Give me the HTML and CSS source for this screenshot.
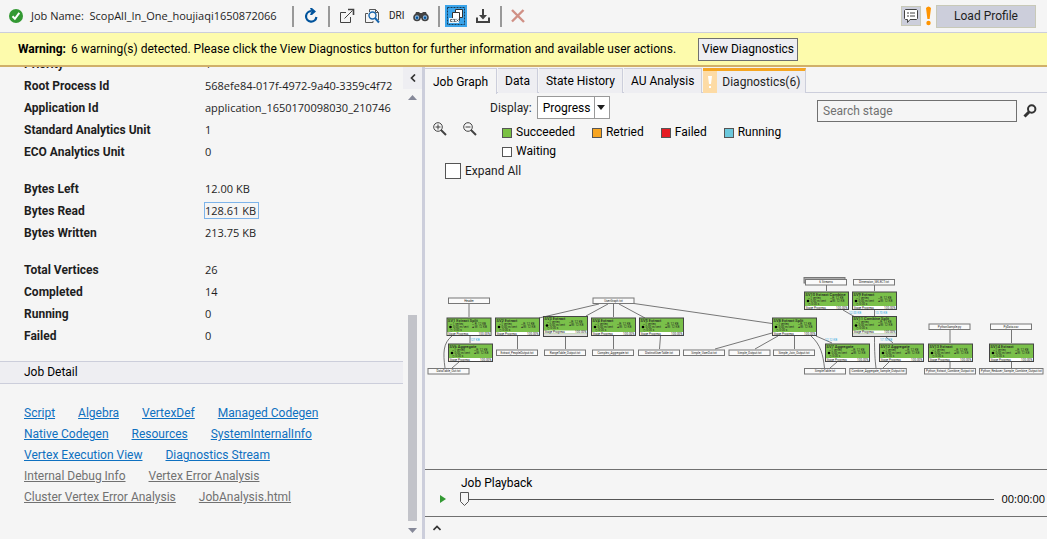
FILE: index.html
```
<!DOCTYPE html>
<html lang="en">
<head>
<meta charset="utf-8">
<title>Job View</title>
<link rel="stylesheet" href="styles.css">
</head>
<body>
<header class="toolbar">
  <svg class="status" width="14" height="14" viewBox="0 0 14 14"><circle cx="7" cy="7" r="7" fill="#339933"/><path d="M3.5 7.2l2.4 2.6 4.4-6" fill="none" stroke="#fff" stroke-width="2"/></svg>
  <span class="job-name">Job Name:&nbsp; ScopAll_In_One_houjiaqi1650872066</span>
  <span class="sep"></span>
  <button class="tool" aria-label="Refresh"><svg width="16" height="16" viewBox="0 0 16 16"><path d="M8.5 3.2A5.2 5.2 0 1 0 13.4 9" fill="none" stroke="#00539c" stroke-width="2.2"/><path d="M7 0h2l4 3.4-4 3.6H7l1.5-3.6z" fill="#00539c"/></svg></button>
  <span class="sep"></span>
  <button class="tool" aria-label="Open in new window"><svg width="16" height="16" viewBox="0 0 16 16" fill="none" stroke="#424242"><path d="M7 4.500H1.500v10h10V9M5.500 10.500L13.500 2.500"/><path d="M9 1.500h5.500V7" stroke-width="1.600"/></svg></button>
  <button class="tool" aria-label="Find in script"><svg width="16" height="16" viewBox="0 0 16 16" fill="none"><path d="M5.500 4V1.500h6l3 3V12M4 5.500H1.500v9H9V13M11.500 1.500v3h3" stroke="#555"/><circle cx="8.500" cy="7.500" r="3.500" fill="#f5f5f5" stroke="#1765ad" stroke-width="1.400"/><path d="M11 10l4 4.500" stroke="#1765ad" stroke-width="2"/></svg></button>
  <button class="tool dri">DRI</button>
  <button class="tool" aria-label="Find"><svg width="16" height="16" viewBox="0 0 16 16"><path d="M3 4h3l1 1h2l1-1h3l1.500 4H9.500v2h-3V8h-5z" fill="#424242"/><circle cx="4" cy="9.500" r="3" fill="#8fb8de" stroke="#424242" stroke-width="1.600"/><circle cx="12" cy="9.500" r="3" fill="#8fb8de" stroke="#424242" stroke-width="1.600"/><circle cx="4" cy="9.700" r="1.200" fill="#00539c"/><circle cx="12" cy="9.700" r="1.200" fill="#00539c"/></svg></button>
  <span class="sep"></span>
  <button class="tool active" aria-label="Show job graph" aria-pressed="true"><svg width="22" height="22" viewBox="0 0 22 22"><rect width="22" height="22" fill="#3ba4ea"/><rect x="2.500" y="2.500" width="17" height="17" fill="none" stroke="#173b56" stroke-dasharray="2 1"/><path d="M10.500 4.500h7v8h-7z" fill="#fff" stroke="#333"/><path d="M7.500 7.500h7v8h-7z" fill="#fff" stroke="#333"/><path d="M4 13h10v5H4z" fill="#e9f3fa"/><path d="M7.500 14.500h-2v2h2m3-2h-2l2 2h-2m3-2l2 2m0-2l-2 2" fill="none" stroke="#444" stroke-width=".8"/></svg></button>
  <button class="tool" aria-label="Download"><svg width="16" height="16" viewBox="0 0 16 16"><path d="M2 9.500v4.500h12V9.500" fill="none" stroke="#424242" stroke-width="2"/><path d="M7 1h2v6h3l-4 4.500L4 7h3z" fill="#424242"/></svg></button>
  <span class="sep"></span>
  <button class="tool" aria-label="Cancel job"><svg width="14" height="16" viewBox="0 0 14 16"><path d="M1 2l12 12M12.500 2L1 13.500" stroke="#d09085" stroke-width="2.400"/></svg></button>
  <span class="spacer"></span>
  <button class="comment" aria-label="Feedback"><svg width="16" height="16" viewBox="0 0 16 16"><path d="M2.500 1.500h11l1 1v8l-1 1H7l-2.500 3v-3h-2l-1-1v-8z" fill="#fff" stroke="#424242"/><path d="M4 5h2m1 0h5M4 8h2m1 0h5" stroke="#424242"/></svg></button>
  <svg width="5" height="20" viewBox="0 0 5 20"><path d="M0 2q2.500-3 5 0L3.600 13H1.400z" fill="#ff9400"/><circle cx="2.500" cy="17" r="2.200" fill="#ff9400"/></svg>
  <button class="load">Load Profile</button>
</header>
<section class="warning">
  <p><strong>Warning:</strong> 6 warning(s) detected. Please click the View Diagnostics button for further information and available user actions.</p>
  <button class="view-diag">View Diagnostics</button>
</section>
<main class="workspace">
  <aside class="side">
    <div class="summary">
      <dl class="props">
        <div><dt>Priority</dt><dd>1</dd></div>
        <div><dt>Root Process Id</dt><dd>568efe84-017f-4972-9a40-3359c4f72</dd></div>
        <div><dt>Application Id</dt><dd>application_1650170098030_210746</dd></div>
        <div><dt>Standard Analytics Unit</dt><dd>1</dd></div>
        <div><dt>ECO Analytics Unit</dt><dd>0</dd></div>
        <div class="group"><dt>Bytes Left</dt><dd>12.00 KB</dd></div>
        <div><dt>Bytes Read</dt><dd><span class="picked">128.61 KB</span></dd></div>
        <div><dt>Bytes Written</dt><dd>213.75 KB</dd></div>
        <div class="group"><dt>Total Vertices</dt><dd>26</dd></div>
        <div><dt>Completed</dt><dd>14</dd></div>
        <div><dt>Running</dt><dd>0</dd></div>
        <div><dt>Failed</dt><dd>0</dd></div>
      </dl>
      <h2 class="section-title">Job Detail</h2>
      <nav class="links">
        <div><a href="#">Script</a><a href="#">Algebra</a><a href="#">VertexDef</a><a href="#">Managed Codegen</a></div>
        <div><a href="#">Native Codegen</a><a href="#">Resources</a><a href="#">SystemInternalInfo</a></div>
        <div><a href="#">Vertex Execution View</a><a href="#">Diagnostics Stream</a></div>
        <div class="muted"><a href="#">Internal Debug Info</a><a href="#">Vertex Error Analysis</a></div>
        <div class="muted"><a href="#">Cluster Vertex Error Analysis</a><a href="#">JobAnalysis.html</a></div>
      </nav>
    </div>
    <div class="rail">
      <button class="collapse" aria-label="Collapse panel"><svg width="6" height="8" viewBox="0 0 6 8"><path d="M5 .5L1.500 4 5 7.500" fill="none" stroke="#333" stroke-width="1.700"/></svg></button>
      <svg class="arrow" width="9" height="5" viewBox="0 0 9 5"><path d="M0 5L4.500 0 9 5z" fill="#868999"/></svg>
      <div class="track"><div class="thumb"></div></div>
      <svg class="arrow" width="9" height="5" viewBox="0 0 9 5"><path d="M0 0L4.500 5 9 0z" fill="#868999"/></svg>
    </div>
  </aside>
  <section class="content">
    <div class="tabs" role="tablist">
      <button class="tab selected" role="tab" aria-selected="true">Job Graph</button>
      <button class="tab" role="tab">Data</button>
      <button class="tab" role="tab">State History</button>
      <button class="tab" role="tab">AU Analysis</button>
      <button class="tab alert" role="tab"><span class="mark"><svg width="4" height="12" viewBox="0 0 4 12"><path d="M0 0h4L3 8H1zM1 10h2v2H1z" fill="#fff"/></svg></span>Diagnostics(6)</button>
    </div>
    <div class="controls">
      <div class="zoom">
        <button aria-label="Zoom in"><svg width="14" height="14" viewBox="0 0 14 14" fill="none" stroke="#424242"><circle cx="5" cy="5" r="4.300"/><path d="M2.500 5h5M5 2.500v5"/><path d="M8 8l5 5" stroke-width="2"/></svg></button>
        <button aria-label="Zoom out"><svg width="14" height="14" viewBox="0 0 14 14" fill="none" stroke="#424242"><circle cx="5" cy="5" r="4.300"/><path d="M2.500 5h5"/><path d="M8 8l5 5" stroke-width="2"/></svg></button>
      </div>
      <div class="display">
        <div class="display-row"><label for="mode">Display:</label>
          <span class="combo"><select id="mode"><option>Progress</option></select><svg width="8" height="5" viewBox="0 0 8 5"><path d="M0 0h8L4 5z" fill="#1e1e1e"/></svg></span></div>
        <ul class="legend">
          <li><i class="sw ok"></i>Succeeded</li><li><i class="sw retry"></i>Retried</li><li><i class="sw fail"></i>Failed</li><li><i class="sw run"></i>Running</li><li><i class="sw"></i>Waiting</li>
        </ul>
      </div>
      <div class="search"><input type="text" placeholder="Search stage" aria-label="Search stage"><button aria-label="Search"><svg width="14" height="14" viewBox="0 0 14 14"><circle cx="8.700" cy="5" r="3.700" fill="none" stroke="#333" stroke-width="2"/><path d="M6 8l-4.500 4.500" stroke="#333" stroke-width="3"/></svg></button></div>
    </div>
    <label class="expand"><input type="checkbox">Expand All</label>
    <div class="canvas"><svg id="graph" viewBox="425 180 622 289" preserveAspectRatio="xMinYMin meet" role="img" aria-label="Job graph"></svg></div>
    <div class="playback">
      <label for="time">Job Playback</label>
      <div class="player">
        <button aria-label="Play"><svg width="6" height="8" viewBox="0 0 6 8"><path d="M0 0l6 4-6 4z" fill="#339933"/></svg></button>
        <input id="time" type="range" min="0" max="100" value="0">
        <output for="time">00:00:00</output>
      </div>
    </div>
    <button class="drawer" aria-label="Expand drawer"><svg width="8" height="6" viewBox="0 0 8 6"><path d="M.5 5L4 1.500 7.500 5" fill="none" stroke="#333" stroke-width="1.700"/></svg></button>
  </section>
</main>
<script src="graph.js"></script>
</body>
</html>
```
FILE: styles.css
```
* { box-sizing: border-box; }
body { margin: 0; height: 100vh; display: flex; flex-direction: column; overflow: hidden; background: #f5f5f5; color: #1e1e1e; font: 12px/16px Roboto, "Open Sans", sans-serif; }
button { font: inherit; color: inherit; border: 0; padding: 0; background: none; }
svg { display: block; flex: none; }
.toolbar { display: flex; align-items: center; height: 33px; flex: none; padding: 0 11px 0 9px; border-bottom: 1px solid #cccedb; }
.job-name, dd, output { font: 11px/16px "Open Sans", "Noto Sans", sans-serif; }
.job-name { margin-left: 8px; min-width: 252px; white-space: nowrap; }
.sep { flex: none; width: 2px; height: 21px; margin: 0 9px; background: #999; }
.tool { display: grid; place-items: center; min-width: 14px; height: 22px; }
.tool + .tool { margin-left: 9px; }
.dri { font: 10px/16px Roboto, sans-serif; }
.active { margin: 0 -4px; }
.active + .tool { margin-left: 12px; }
.spacer { flex: 1; }
.comment { width: 20px; height: 20px; display: grid; place-items: center; margin-right: 5px; background: #cccedb; border: 1px solid #c8c9b8; }
.load { width: 100px; height: 23px; margin-left: 5px; background: #cccedb; border: 1px solid #c8c9b8; }
.warning { display: flex; align-items: center; flex: none; height: 34px; padding-left: 18px; gap: 22px; background: #fdfbac; border-bottom: 2px solid #d0b069; color: #000; white-space: nowrap; }
.warning p { margin: 0; }
.warning strong { margin-right: 2px; }
.view-diag { width: 100px; height: 23px; background: #eeeef2; border: 1px solid #707070; }
.workspace { display: flex; flex: 1; min-height: 0; }
.side { display: flex; flex: 0 0 425px; min-width: 0; border-right: 3px solid #cccedb; }
.summary { flex: 1; min-width: 0; overflow: hidden; }
.props { margin: -14px 0 14px; }
.props div { display: grid; grid-template-columns: 181px 1fr; height: 22px; align-items: center; padding-left: 24px; white-space: nowrap; }
.props .group { margin-top: 15px; }
dt { font-weight: 700; }
dd { margin: 0; }
.picked { outline: 1px solid #7eb4ea; padding-right: 2px; }
.section-title { margin: 0; padding-left: 24px; font: inherit; line-height: 21px; color: #000; background: #eeeef2; border: solid #cccedb; border-width: 1px 0; }
.links { padding: 19px 24px; line-height: 21px; white-space: nowrap; }
.links div { display: flex; gap: 23px; }
.links a { color: #0e70c0; }
.links .muted a { color: #717171; }
.rail { display: flex; flex: none; flex-direction: column; align-items: center; width: 19px; padding-bottom: 6px; }
.collapse { display: grid; place-items: center; width: 19px; height: 22px; margin-bottom: 6px; background: #eeeef2; }
.track { display: flex; flex-direction: column; justify-content: flex-end; flex: 1; width: 9px; padding-bottom: 7px; }
.thumb { height: 49%; background: #c2c3c9; }
.content { display: flex; flex-direction: column; flex: 1; min-width: 0; }
.tabs { display: flex; flex: none; height: 26px; padding: 1px 0 0; border-bottom: 1px solid #cccedb; }
.tab { height: 25px; padding: 0 7px; margin-right: 1px; background: #eeeef2; border: 1px solid #cccedb; border-width: 1px 1px 0 0; color: #000; }
.selected { position: relative; height: 26px; padding: 0 8px; background: #f5f5f5; }
.alert { display: flex; align-items: center; padding: 0 5px 0 0; border-top: 3px solid #f5a623; color: #1e1e1e; }
.mark { display: grid; place-items: center; align-self: stretch; width: 14px; margin-right: 5px; background: #fddba5; }
.controls { display: flex; align-items: flex-start; flex: none; padding: 3px 10px 0 8px; }
.zoom { display: flex; gap: 16px; padding-top: 26px; }
.display { flex: 1; padding-left: 13px; }
.display-row { display: flex; align-items: center; gap: 5px; }
.combo { display: flex; align-items: center; width: 73px; height: 23px; padding-right: 4px; background: linear-gradient(90deg, transparent 56px, #999 56px 57px, transparent 57px) #fff; border: 1px solid #999; }
select { appearance: none; flex: 1; min-width: 0; padding: 0 5px; border: 0; background: none; font: inherit; color: #000; }
.legend { display: flex; flex-wrap: wrap; width: 300px; margin: 4px 0 0 12px; padding: 0; list-style: none; line-height: 19px; color: #000; column-gap: 17px; }
.legend li { display: flex; align-items: center; gap: 4px; }
.sw { width: 10px; height: 10px; background: #fff; border: 1px solid #555; }
.ok { background: #7ac143; }
.retry { background: #f7a521; }
.fail { background: #e51c23; }
.run { background: #6bc8dc; }
.search { display: flex; align-items: center; gap: 6px; padding-top: 4px; }
.search input { width: 200px; height: 22px; padding: 0 5px; font: inherit; background: #f5f5f5; border: 1px solid #707070; }
.search input::placeholder { color: #717171; }
.expand { display: flex; align-items: center; gap: 4px; flex: none; height: 19px; padding-left: 20px; }
.expand input { appearance: none; width: 16px; height: 16px; margin: 0; background: #fff; border: 1px solid #555; }
.canvas { flex: 1; min-height: 0; }
#graph { width: 100%; height: 100%; font: 3px Roboto, sans-serif; }
#graph text { fill: #222; }
.edge { fill: none; stroke: #555; stroke-width: .8; }
.data { fill: #fafafa; stroke: #777; stroke-width: 1; }
.stack { fill: #aaa; }
.card { fill: #7ac04a; stroke: #444; stroke-width: 1; }
.foot { fill: #fff; }
.wait { fill: #ddd; }
#graph .rate { fill: #2aa7e0; }
#graph .name { font-size: 4px; font-weight: 500; }
.playback { flex: none; height: 48px; padding: 5px 2px 0 15px; border: solid #707070; border-width: 1px 0; color: #000; }
.playback label { display: block; padding-left: 21px; }
.player { display: flex; align-items: center; }
.player input { appearance: none; flex: 1; min-width: 0; height: 14px; margin: 0 7px 0 14px; background: linear-gradient(#555, #555) center / 100% 1px no-repeat; }
.player input::-webkit-slider-thumb { appearance: none; width: 9px; height: 14px; background: url("data:image/svg+xml,%3Csvg xmlns='http://www.w3.org/2000/svg' width='9' height='14'%3E%3Cpath d='M.5.5h8v9l-4 4-4-4z' fill='%23f5f5f5' stroke='%23555'/%3E%3C/svg%3E"); }
.drawer { flex: none; height: 22px; padding-left: 8px; }
```
FILE: graph.js
```
const svg = document.getElementById("graph");
const NS = "http://www.w3.org/2000/svg";

function add(tag, attrs, text) {
  const el = document.createElementNS(NS, tag);
  for (const key in attrs) el.setAttribute(key, attrs[key]);
  if (text) el.textContent = text;
  svg.append(el);
}

const edges = [
  "M469 304V317", "M470 336V343", "M452 336C443 343 443 353 445 368", "M459 362L452 368",
  "M599 304L539 318", "M608 304L586 316", "M613.500 304V317", "M619 304L645 318", "M634 303.500L772 323.500",
  "M517.500 336V349", "M565.500 337V349", "M613.500 336V349", "M660.500 336L659.500 349",
  "M772 333L715 349", "M778 336L755 349", "M794.500 336V349", "M811 336C821 345 823 355 824.500 368",
  "M816 336L832 343", "M837 362L830 368", "M826.500 285V291", "M874.500 285V291", "M843 310L855 317",
  "M874.500 310V316", "M886 337L893 343", "M874.500 337C874.500 352 875 360 876 368", "M889 362L883 368",
  "M950 330V343", "M950 362V368", "M1011.500 330V343", "M1011.500 362V368"
];

const data = [
  [448.5, 298, 41, "Header"], [593, 298, 41, "UserGraph.txt"],
  [496.5, 350, 41, "Extract_PeopleOutput.txt"], [544.5, 350, 41, "RangeTable_Output.txt"],
  [592.5, 350, 41, "Complex_Aggregate.txt"], [638.5, 350, 41, "DistinctUserTable.txt"],
  [683.5, 350, 41, "Simple_UserOut.txt"], [729, 350, 41, "Simple_Output.txt"],
  [773.5, 350, 41, "Simple_Join_Output.txt"], [428, 368.5, 41, "DataTable_Out.txt"],
  [804.5, 368.5, 41, "SimpleTable.txt"], [849.8, 368.5, 56.5, "Combine_Aggregate_Sample_Output.txt"],
  [924.5, 368.5, 51, "Python_Extract_Combine_Output.txt"], [979.5, 368.5, 63.5, "Python_Reducer_Sample_Combine_Output.txt"],
  [853.5, 279.5, 41, "Dimension_SELECT.txt"], [929, 324, 41, "PythonSample.py"], [990.5, 324, 41, "PyData.csv"]
];

const cards = [
  [447, 318, "SV1 Extract Split"], [495.5, 318, "SV2 Extract"], [543.5, 316.5, "SV3 Extract", 1],
  [591.5, 318, "SV4 Extract"], [639.5, 318, "SV5 Extract"], [448.5, 344, "SV6 Aggregate"],
  [772.5, 318, "SV8 Extract Split"], [804.5, 292, "SV10 Extract Combine"], [852.5, 292, "SV9 Extract"],
  [852.5, 316.5, "SV11 Combine Split", 1], [825.5, 344, "SV7 Aggregate"], [879.5, 344, "SV12 Aggregate"],
  [928.5, 344, "SV13 Extract"], [989.5, 344, "SV14 Extract"]
];

edges.forEach(d => add("path", { class: "edge", d }));

add("rect", { class: "data stack", x: 804, y: 277.5, width: 41, height: 5.5 });
data.push([805.5, 279.5, 41, "6 Streams"]);
data.forEach(([x, y, w, label]) => {
  add("rect", { class: "data", x, y, width: w, height: 5.5 });
  add("text", { x: x + w / 2, y: y + 3.7, "text-anchor": "middle" }, label);
});

cards.forEach(([x, y, name, waiting]) => {
  const h = waiting ? 20 : 17.5;
  add("rect", { class: "card", x, y, width: 44, height: h });
  add("rect", { class: "foot", x: x + .5, y: y + 14, width: 43, height: 3 });
  if (waiting) add("rect", { class: "wait", x: x + .5, y: y + 17, width: 43, height: 2.5 });
  add("text", { class: "name", x: x + 1, y: y + 3.5 }, name);
  add("circle", { cx: x + 3.5, cy: y + 9, r: 1.3 });
  add("text", { x: x + 3, y: y + 6.8 }, "▱ 1 vertex");
  add("text", { x: x + 6, y: y + 9.8 }, "0:00 m/vert");
  add("text", { x: x + 3, y: y + 12.8 }, "◷ 0:00 s");
  add("text", { x: x + 25, y: y + 6.8 }, "▱ R: 12 KB");
  add("text", { x: x + 25, y: y + 9.8 }, "▰ W: 12 KB");
  add("text", { x: x + 1, y: y + 16.5 }, "Stage Progress");
  add("text", { x: x + 43, y: y + 16.5, "text-anchor": "end" }, "100.00%");
});

[[470, 341, "127 KB"], [825, 341, "12.12 KB"], [849, 314, "12.00 KB"], [875, 314, "13.70 KB"], [880, 341, "17.70 KB"]]
  .forEach(([x, y, label]) => add("text", { class: "rate", x, y }, label));
```
